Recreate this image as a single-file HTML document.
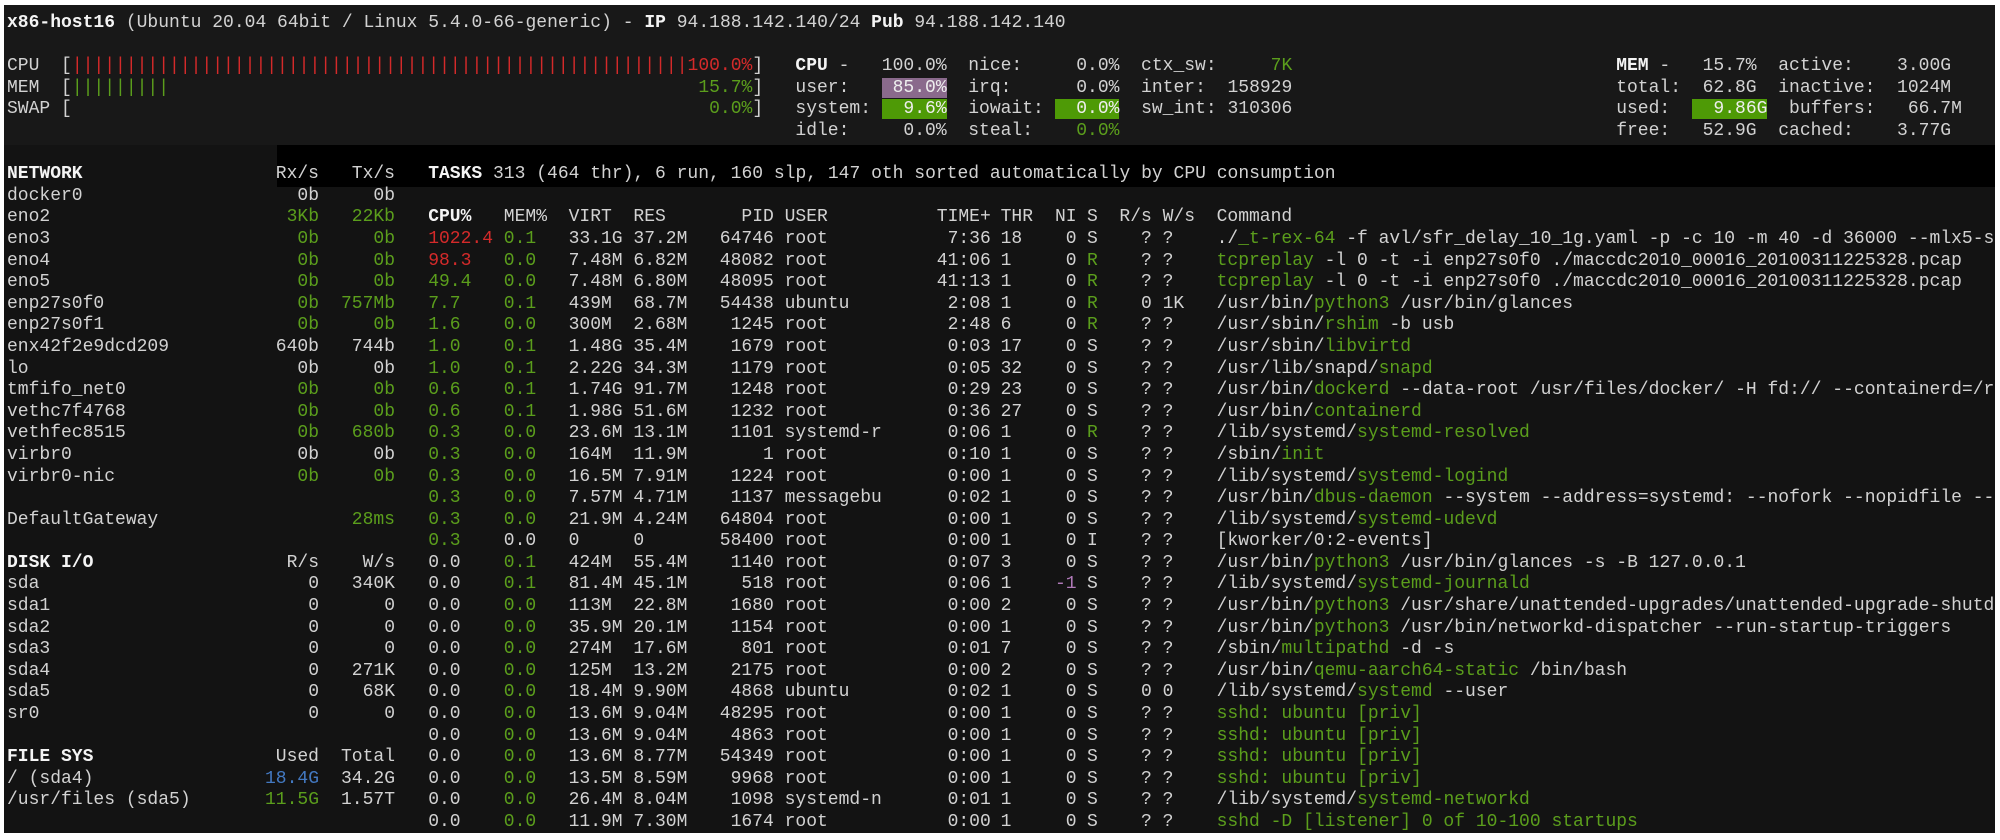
<!DOCTYPE html>
<html><head><meta charset="utf-8">
<style>
html,body{margin:0;padding:0;background:#fff;width:2000px;height:840px;overflow:hidden}
#t{position:absolute;left:4px;top:5px;width:1991px;height:828px;background:#131313;overflow:hidden}
#top{position:absolute;left:0;top:0;width:1991px;height:140px;background:#181818}
#band{position:absolute;left:273px;top:140px;width:1718px;height:42px;background:#000}
#w{position:absolute;left:0;top:4px;width:1991px;height:828px}
.c{position:absolute;white-space:pre;font-family:"Liberation Mono","DejaVu Sans Mono",monospace;font-size:18px;line-height:21.6px;color:#d2d2d2}
.r{text-align:right}
b{color:#f4f4f4;font-weight:bold}
.g{color:#5b9e1c}
.rd{color:#d42a2a}
.bl{color:#4379c2}
.pb{background:#8a6a8c;color:#eee}
.gb{background:#4e9a06;color:#eee}
.pu{color:#b07ab8}
</style></head><body>
<div id="t">
<div id="top"></div>
<div id="band"></div>
<div id="w">

<div class="c" style="left:3px;top:4px"><b>x86-host16</b> (Ubuntu 20.04 64bit / Linux 5.4.0-66-generic) - <b>IP</b> 94.188.142.140/24 <b>Pub</b> 94.188.142.140

CPU  [<span class="rd">|||||||||||||||||||||||||||||||||||||||||||||||||||||||||100.0%</span>]
MEM  [<span class="g">|||||||||</span>                                                 <span class="g">15.7%</span>]
SWAP [                                                           <span class="g">0.0%</span>]</div>

<div class="c" style="left:791.4px;top:47.2px"><b>CPU</b> -   100.0%  nice:     0.0%  ctx_sw:    <span class="g"> 7K</span>
user:   <span class="pb"> 85.0%</span>  irq:      0.0%  inter:  158929
system: <span class="gb">  9.6%</span>  iowait: <span class="gb">  0.0%</span>  sw_int: 310306
idle:     0.0%  steal:    <span class="g">0.0%</span></div>

<div class="c" style="left:1612.2px;top:47.2px"><b>MEM</b> -   15.7%  active:    3.00G
total:  62.8G  inactive:  1024M
used:  <span class="gb">  9.86G</span>  buffers:   66.7M
free:   52.9G  cached:    3.77G</div>

<div class="c" style="left:3px;top:155.2px"><b>NETWORK</b>
docker0
eno2
eno3
eno4
eno5
enp27s0f0
enp27s0f1
enx42f2e9dcd209
lo
tmfifo_net0
vethc7f4768
vethfec8515
virbr0
virbr0-nic

DefaultGateway

<b>DISK I/O</b>
sda
sda1
sda2
sda3
sda4
sda5
sr0

<b>FILE SYS</b>
/ (sda4)
/usr/files (sda5)</div>

<div class="c r" style="left:215px;width:100px;top:155.2px">Rx/s
0b
<span class="g">3Kb</span>
<span class="g">0b</span>
<span class="g">0b</span>
<span class="g">0b</span>
<span class="g">0b</span>
<span class="g">0b</span>
640b
0b
<span class="g">0b</span>
<span class="g">0b</span>
<span class="g">0b</span>
0b
<span class="g">0b</span>



R/s
0
0
0
0
0
0
0

Used
<span class="bl">18.4G</span>
<span class="g">11.5G</span></div>

<div class="c r" style="left:291px;width:100px;top:155.2px">Tx/s
0b
<span class="g">22Kb</span>
<span class="g">0b</span>
<span class="g">0b</span>
<span class="g">0b</span>
<span class="g">757Mb</span>
<span class="g">0b</span>
744b
0b
<span class="g">0b</span>
<span class="g">0b</span>
<span class="g">680b</span>
0b
<span class="g">0b</span>

<span class="g">28ms</span>

W/s
340K
0
0
0
271K
68K
0

Total
34.2G
1.57T</div>

<div class="c" style="left:424.2px;top:155.2px"><b>TASKS</b> 313 (464 thr), 6 run, 160 slp, 147 oth sorted automatically by CPU consumption</div>

<div class="c" style="left:424.2px;top:198.4px"><b>CPU%</b>
<span class="rd">1022.4</span>
<span class="rd">98.3</span>
<span class="g">49.4
7.7
1.6
1.0
1.0
0.6
0.6
0.3
0.3
0.3
0.3
0.3
0.3</span>
0.0
0.0
0.0
0.0
0.0
0.0
0.0
0.0
0.0
0.0
0.0
0.0
0.0</div>

<div class="c" style="left:499.8px;top:198.4px">MEM%
<span class="g">0.1
0.0
0.0
0.1
0.0
0.1
0.1
0.1
0.1
0.0
0.0
0.0
0.0
0.0</span>
0.0
<span class="g">0.1
0.1
0.0
0.0
0.0
0.0
0.0
0.0
0.0
0.0
0.0
0.0
0.0</span></div>

<div class="c" style="left:564.6px;top:198.4px">VIRT
33.1G
7.48M
7.48M
439M
300M
1.48G
2.22G
1.74G
1.98G
23.6M
164M
16.5M
7.57M
21.9M
0
424M
81.4M
113M
35.9M
274M
125M
18.4M
13.6M
13.6M
13.6M
13.5M
26.4M
11.9M</div>

<div class="c" style="left:629.4px;top:198.4px">RES
37.2M
6.82M
6.80M
68.7M
2.68M
35.4M
34.3M
91.7M
51.6M
13.1M
11.9M
7.91M
4.71M
4.24M
0
55.4M
45.1M
22.8M
20.1M
17.6M
13.2M
9.90M
9.04M
9.04M
8.77M
8.59M
8.04M
7.30M</div>

<div class="c r" style="left:669.8px;width:100px;top:198.4px">PID
64746
48082
48095
54438
1245
1679
1179
1248
1232
1101
1
1224
1137
64804
58400
1140
518
1680
1154
801
2175
4868
48295
4863
54349
9968
1098
1674</div>

<div class="c" style="left:780.6px;top:198.4px">USER
root
root
root
ubuntu
root
root
root
root
root
systemd-r
root
root
messagebu
root
root
root
root
root
root
root
root
ubuntu
root
root
root
root
systemd-n
root</div>

<div class="c r" style="left:886.8px;width:100px;top:198.4px">TIME+
7:36
41:06
41:13
2:08
2:48
0:03
0:05
0:29
0:36
0:06
0:10
0:00
0:02
0:00
0:00
0:07
0:06
0:00
0:00
0:01
0:00
0:02
0:00
0:00
0:00
0:00
0:01
0:00</div>

<div class="c" style="left:996.6px;top:198.4px">THR
18
1
1
1
6
17
32
23
27
1
1
1
1
1
1
3
1
2
1
7
2
1
1
1
1
1
1
1</div>

<div class="c r" style="left:972.6px;width:100px;top:198.4px">NI
0
0
0
0
0
0
0
0
0
0
0
0
0
0
0
0
<span class="pu">-1</span>
0
0
0
0
0
0
0
0
0
0
0</div>

<div class="c" style="left:1083px;top:198.4px">S
S
<span class="g">R</span>
<span class="g">R</span>
<span class="g">R</span>
<span class="g">R</span>
S
S
S
S
<span class="g">R</span>
S
S
S
S
I
S
S
S
S
S
S
S
S
S
S
S
S
S</div>

<div class="c r" style="left:1047.8px;width:100px;top:198.4px">R/s
?
?
?
0
?
?
?
?
?
?
?
?
?
?
?
?
?
?
?
?
?
0
?
?
?
?
?
?</div>

<div class="c" style="left:1158.6px;top:198.4px">W/s
?
?
?
1K
?
?
?
?
?
?
?
?
?
?
?
?
?
?
?
?
?
0
?
?
?
?
?
?</div>

<div class="c" style="left:1212.6px;top:198.4px">Command
./<span class="g">_t-rex-64</span> -f avl/sfr_delay_10_1g.yaml -p -c 10 -m 40 -d 36000 --mlx5-so
<span class="g">tcpreplay</span> -l 0 -t -i enp27s0f0 ./maccdc2010_00016_20100311225328.pcap
<span class="g">tcpreplay</span> -l 0 -t -i enp27s0f0 ./maccdc2010_00016_20100311225328.pcap
/usr/bin/<span class="g">python3</span> /usr/bin/glances
/usr/sbin/<span class="g">rshim</span> -b usb
/usr/sbin/<span class="g">libvirtd</span>
/usr/lib/snapd/<span class="g">snapd</span>
/usr/bin/<span class="g">dockerd</span> --data-root /usr/files/docker/ -H fd:// --containerd=/run
/usr/bin/<span class="g">containerd</span>
/lib/systemd/<span class="g">systemd-resolved</span>
/sbin/<span class="g">init</span>
/lib/systemd/<span class="g">systemd-logind</span>
/usr/bin/<span class="g">dbus-daemon</span> --system --address=systemd: --nofork --nopidfile --sys
/lib/systemd/<span class="g">systemd-udevd</span>
[kworker/0:2-events]
/usr/bin/<span class="g">python3</span> /usr/bin/glances -s -B 127.0.0.1
/lib/systemd/<span class="g">systemd-journald</span>
/usr/bin/<span class="g">python3</span> /usr/share/unattended-upgrades/unattended-upgrade-shutdown
/usr/bin/<span class="g">python3</span> /usr/bin/networkd-dispatcher --run-startup-triggers
/sbin/<span class="g">multipathd</span> -d -s
/usr/bin/<span class="g">qemu-aarch64-static</span> /bin/bash
/lib/systemd/<span class="g">systemd</span> --user
<span class="g">sshd: ubuntu [priv]</span>
<span class="g">sshd: ubuntu [priv]</span>
<span class="g">sshd: ubuntu [priv]</span>
<span class="g">sshd: ubuntu [priv]</span>
/lib/systemd/<span class="g">systemd-networkd</span>
<span class="g">sshd -D [listener] 0 of 10-100 startups</span></div>

</div>
</div>
</body></html>
